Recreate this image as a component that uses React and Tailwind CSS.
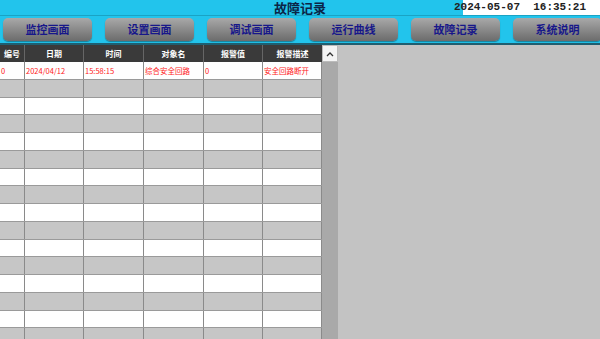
import React from "react";

const cols = [25, 59, 60, 60, 59, 59];
const heads = ["编号", "日期", "时间", "对象名", "报警值", "报警描述"];
const first = ["0", "2024/04/12", "15:58:15", "综合安全回路", "0", "安全回路断开"];
const navs = ["监控画面", "设置画面", "调试画面", "运行曲线", "故障记录", "系统说明"];

export default function App() {
  const rows = Array.from({ length: 16 }, (_, i) => i);
  return (
    <div
      className="w-[600px] h-[339px] overflow-hidden flex flex-col bg-[#c3c3c3]"
      style={{ fontFamily: '"Noto Sans CJK SC", "Liberation Sans", sans-serif' }}
    >
      {/* title bar */}
      <div className="h-[16px] flex bg-[#22c4ec] border-b border-[#1aa3c4] shrink-0">
        <div className="w-[137px]" />
        <div className="flex-1 flex items-center justify-center text-[13px] leading-[15px] text-[#0b2547] font-semibold">
          故障记录
        </div>
        <div
          className="w-[137px] bg-white flex items-center justify-end pr-[14px] text-[11px] font-bold text-[#222] whitespace-pre"
          style={{ fontFamily: '"Liberation Mono", monospace' }}
        >
          2024-05-07  16:35:21
        </div>
      </div>
      {/* nav bar */}
      <div className="h-[27px] bg-[#22c4ec] flex items-center gap-[13px] pl-[3px] shrink-0">
        {navs.map((n) => (
          <div
            key={n}
            className="w-[89px] h-[23px] shrink-0 rounded-[5px] bg-gradient-to-b from-[#a9a9a9] via-[#8a8a8a] to-[#6c6c6c] flex items-center justify-center text-[11px] font-bold text-[#17178a] shadow-[0_1px_1px_rgba(0,0,0,0.35)]"
          >
            {n}
          </div>
        ))}
      </div>
      <div className="h-[2px] bg-[#1f5e70] shrink-0" />
      {/* body */}
      <div className="flex flex-1 min-h-0">
        <div className="w-[322px] flex flex-col">
          <div className="h-[17px] flex bg-[#3a3a3a] shrink-0">
            {heads.map((h, i) => (
              <div
                key={h}
                style={{ width: cols[i] }}
                className="flex items-center justify-center text-[8px] font-bold text-white border-r border-[#666] last:border-r-0"
              >
                {h}
              </div>
            ))}
          </div>
          {rows.map((r) => (
            <div
              key={r}
              className={`h-[17.75px] flex shrink-0 border-b border-[#9a9a9a] ${r % 2 === 0 ? "bg-white" : "bg-[#c6c6c6]"}`}
            >
              {cols.map((w, i) => (
                <div
                  key={i}
                  style={{ width: w }}
                  className="flex items-center pl-[1px] text-[7.5px] text-[#ff1a1a] border-r border-[#8a8a8a] whitespace-nowrap overflow-hidden"
                >
                  {r === 0 ? first[i] : ""}
                </div>
              ))}
            </div>
          ))}
        </div>
        {/* scrollbar */}
        <div className="w-[16px] flex flex-col bg-[#a9a9a9]">
          <div className="h-[17px] bg-[#f4f4f4] border border-[#bbb] flex items-center justify-center">
            <svg width="8" height="6" viewBox="0 0 8 6">
              <path d="M1 5 L4 2 L7 5" fill="none" stroke="#333" strokeWidth="1.3" />
            </svg>
          </div>
        </div>
        <div className="flex-1 bg-[#c3c3c3]" />
      </div>
    </div>
  );
}
